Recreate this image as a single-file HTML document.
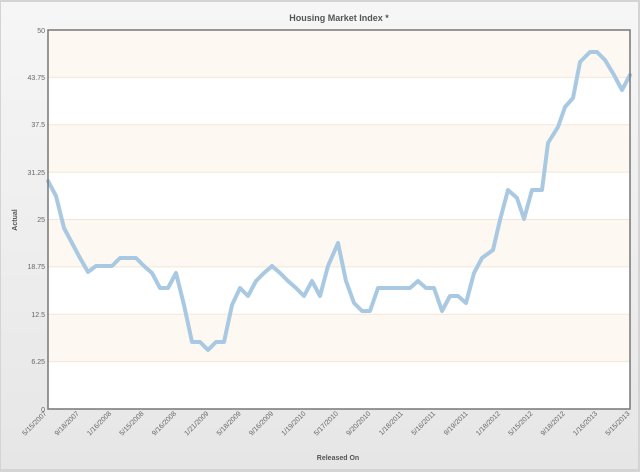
<!DOCTYPE html>
<html><head><meta charset="utf-8"><style>
html,body{margin:0;padding:0;width:640px;height:472px;overflow:hidden;background:#fff}
</style></head><body>
<svg width="640" height="472" viewBox="0 0 640 472" xmlns="http://www.w3.org/2000/svg" font-family="Liberation Sans, sans-serif">
<defs>
<linearGradient id="bg" x1="0" y1="0" x2="0" y2="1">
<stop offset="0" stop-color="#f6f6f6"/><stop offset="1" stop-color="#e6e6e6"/>
</linearGradient>
</defs>
<rect x="0" y="0" width="640" height="472" fill="#d4d4d4"/>
<rect x="1" y="2" width="637" height="467" fill="url(#bg)"/>
<text x="339" y="21" font-size="9" font-weight="bold" fill="#555" text-anchor="middle">Housing Market Index *</text>
<g>
<rect x="48" y="30" width="582" height="47.4" fill="#fdf8f1"/>
<rect x="48" y="77.4" width="582" height="47.4" fill="#fff"/>
<rect x="48" y="124.8" width="582" height="47.4" fill="#fdf8f1"/>
<rect x="48" y="172.1" width="582" height="47.4" fill="#fff"/>
<rect x="48" y="219.5" width="582" height="47.4" fill="#fdf8f1"/>
<rect x="48" y="266.9" width="582" height="47.4" fill="#fff"/>
<rect x="48" y="314.3" width="582" height="47.4" fill="#fdf8f1"/>
<rect x="48" y="361.6" width="582" height="47.4" fill="#fff"/>
<g stroke="#f3e6d6" stroke-width="1">
<line x1="48" x2="630" y1="77.4" y2="77.4"/><line x1="48" x2="630" y1="124.8" y2="124.8"/>
<line x1="48" x2="630" y1="172.1" y2="172.1"/><line x1="48" x2="630" y1="219.5" y2="219.5"/>
<line x1="48" x2="630" y1="266.9" y2="266.9"/><line x1="48" x2="630" y1="314.3" y2="314.3"/>
<line x1="48" x2="630" y1="361.6" y2="361.6"/>
</g>
</g>
<polyline fill="none" stroke="#a9c9e2" stroke-width="4" stroke-linejoin="round" stroke-linecap="round"
points="48,181 56,196 64,228 72,243 80,258 88,272 96,266 104,266 112,266 120,258 128,258 136,258 144,266 152,273 160,288 168,288 176,273 184,305 192,342 200,342 208,350 216,342 224,342 232,305 240,288 248,296 256,281 264,273 272,266 280,273 288,281 296,288 304,296 312,281 320,296 328,266 338,243 346,281 354,303 362,311 370,311 378,288 386,288 394,288 402,288 410,288 418,281 426,288 434,288 442,311 450,296 458,296 466,303 474,273 482,258 493,250 500,220 508,190 517,198 524,219 532,190 542,190 548,143 558,127 565,107 573,98 580,62 590,52 597,52 605,60 614,75 622,90 630,75"/>
<path d="M48,30 V409 H630 V30 Z" fill="none" stroke="#777" stroke-width="1.5"/>
<g font-size="7" fill="#666" text-anchor="end">
<text x="45" y="33">50</text><text x="45" y="80">43.75</text><text x="45" y="127">37.5</text>
<text x="45" y="175">31.25</text><text x="45" y="222">25</text><text x="45" y="269">18.75</text>
<text x="45" y="317">12.5</text><text x="45" y="364">6.25</text><text x="45" y="412">0</text>
</g>
<text x="17" y="220" font-size="7" font-weight="bold" fill="#555" text-anchor="middle" transform="rotate(-90 17 220)">Actual</text>
<g font-size="7" fill="#666" text-anchor="end">
<text transform="translate(47,414) rotate(-45)">5/15/2007</text>
<text transform="translate(79.4,414) rotate(-45)">9/18/2007</text>
<text transform="translate(111.8,414) rotate(-45)">1/16/2008</text>
<text transform="translate(144.2,414) rotate(-45)">5/15/2008</text>
<text transform="translate(176.6,414) rotate(-45)">9/16/2008</text>
<text transform="translate(209,414) rotate(-45)">1/21/2009</text>
<text transform="translate(241.4,414) rotate(-45)">5/18/2009</text>
<text transform="translate(273.8,414) rotate(-45)">9/16/2009</text>
<text transform="translate(306.2,414) rotate(-45)">1/19/2010</text>
<text transform="translate(338.6,414) rotate(-45)">5/17/2010</text>
<text transform="translate(371,414) rotate(-45)">9/20/2010</text>
<text transform="translate(403.4,414) rotate(-45)">1/18/2011</text>
<text transform="translate(435.8,414) rotate(-45)">5/16/2011</text>
<text transform="translate(468.2,414) rotate(-45)">9/19/2011</text>
<text transform="translate(500.6,414) rotate(-45)">1/18/2012</text>
<text transform="translate(533,414) rotate(-45)">5/15/2012</text>
<text transform="translate(565.4,414) rotate(-45)">9/18/2012</text>
<text transform="translate(597.8,414) rotate(-45)">1/16/2013</text>
<text transform="translate(630.2,414) rotate(-45)">5/15/2013</text>
</g>
<text x="338" y="460" font-size="7" font-weight="bold" fill="#555" text-anchor="middle">Released On</text>
</svg>
</body></html>
